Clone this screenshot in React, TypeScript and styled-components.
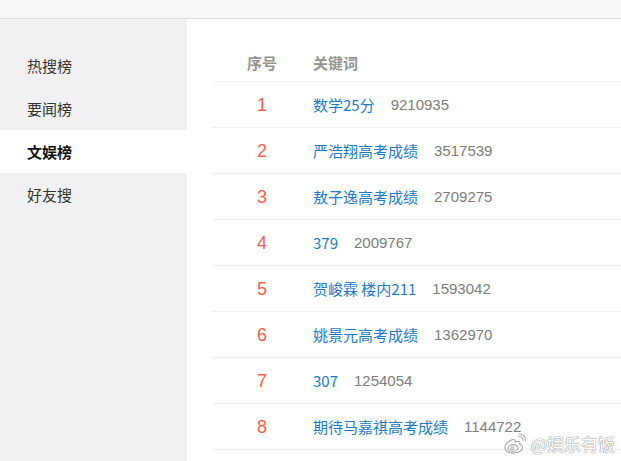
import React from "react"
import styled, { createGlobalStyle } from "styled-components"

const GlobalStyle = createGlobalStyle`
  html, body {
    margin: 0;
    padding: 0;
    background: #fff;
    font-family: "Microsoft YaHei", "Noto Sans CJK SC", "Liberation Sans", sans-serif;
  }
`

const Page = styled.div`
  position: relative;
  width: 621px;
  height: 461px;
  overflow: hidden;
  display: flex;
  flex-direction: column;
`

const TopBar = styled.div`
  height: 18px;
  background: #f7f7f7;
  border-bottom: 1px solid #dedede;
  flex-shrink: 0;
`

const Main = styled.div`
  display: flex;
  flex: 1;
`

const Sidebar = styled.div`
  width: 187px;
  background: #f1f1f3;
  padding-top: 25px;
  flex-shrink: 0;
`

const NavItem = styled.div<{ $active?: boolean }>`
  height: 43px;
  line-height: 43px;
  padding-left: 27px;
  font-size: 15px;
  color: ${(p) => (p.$active ? "#111" : "#333")};
  font-weight: ${(p) => (p.$active ? 700 : 400)};
  background: ${(p) => (p.$active ? "#fff" : "transparent")};
`

const Content = styled.div`
  flex: 1;
  padding-top: 25px;
  padding-left: 26px;
`

const HeaderRow = styled.div`
  display: flex;
  align-items: center;
  height: 37px;
  border-bottom: 1px solid #f3f3f3;
  font-size: 15px;
  color: #939393;
  font-weight: 700;
`

const Row = styled.div`
  display: flex;
  align-items: center;
  height: 45px;
  border-bottom: 1px solid #eeeeee;
  font-size: 15px;
`

const RankCell = styled.div`
  width: 98px;
  text-align: center;
`

const Rank = styled.span`
  font-family: "Liberation Sans", Arial, sans-serif;
  font-size: 18px;
  color: #f4604f;
`

const KeywordCell = styled.div`
  margin-left: 2px;
  display: flex;
  gap: 16px;
  align-items: center;
`

const Keyword = styled.span`
  color: #1a7bc9;
`

const Count = styled.span`
  color: #7d7d7d;
  font-family: "Liberation Sans", Arial, sans-serif;
`

const Watermark = styled.div`
  position: absolute;
  right: 6px;
  bottom: 5px;
  display: flex;
  align-items: center;
  gap: 4px;
  font-size: 17px;
  color: #fff;
  text-shadow: 0 0 1px #999, 0 0 1px #999, 0 0 1px #999;
`

const items = [
  { k: "数学25分", n: "9210935" },
  { k: "严浩翔高考成绩", n: "3517539" },
  { k: "敖子逸高考成绩", n: "2709275" },
  { k: "379", n: "2009767" },
  { k: "贺峻霖 楼内211", n: "1593042" },
  { k: "姚景元高考成绩", n: "1362970" },
  { k: "307", n: "1254054" },
  { k: "期待马嘉祺高考成绩", n: "1144722" },
]

const WeiboLogo = () => (
  <svg width="24" height="22" viewBox="0 0 24 22" fill="none" stroke="#aaa" strokeWidth="1.1">
    <path d="M9.5 6.5c-4 1.5-8 5-7.5 8.5s5 5.5 9.5 5c5-.5 8.5-3 8-6-.3-1.8-2-2.3-2.8-2.5.6-1.4.5-3-1.3-3.2-1 0-2.4.6-3.3 1 .5-1.5.5-3.2-2.6-2.8z" />
    <ellipse cx="10" cy="15" rx="5" ry="3.4" />
    <circle cx="9.2" cy="15.3" r="1.5" />
    <path d="M15.5 3.5c2.5-.3 4.8 1.6 4.5 4.4" />
    <path d="M15.5 1c4.2-.5 7.6 3 7 7.2" />
  </svg>
)

export default function App() {
  return (
    <Page>
      <GlobalStyle />
      <TopBar />
      <Main>
        <Sidebar>
          <NavItem>热搜榜</NavItem>
          <NavItem>要闻榜</NavItem>
          <NavItem $active>文娱榜</NavItem>
          <NavItem>好友搜</NavItem>
        </Sidebar>
        <Content>
          <HeaderRow>
            <RankCell>序号</RankCell>
            <KeywordCell>关键词</KeywordCell>
          </HeaderRow>
          {items.map((it, i) => (
            <Row key={i}>
              <RankCell>
                <Rank>{i + 1}</Rank>
              </RankCell>
              <KeywordCell>
                <Keyword>{it.k}</Keyword>
                <Count>{it.n}</Count>
              </KeywordCell>
            </Row>
          ))}
        </Content>
      </Main>
      <Watermark>
        <WeiboLogo />
        <span>@娱乐有饭</span>
      </Watermark>
    </Page>
  )
}
